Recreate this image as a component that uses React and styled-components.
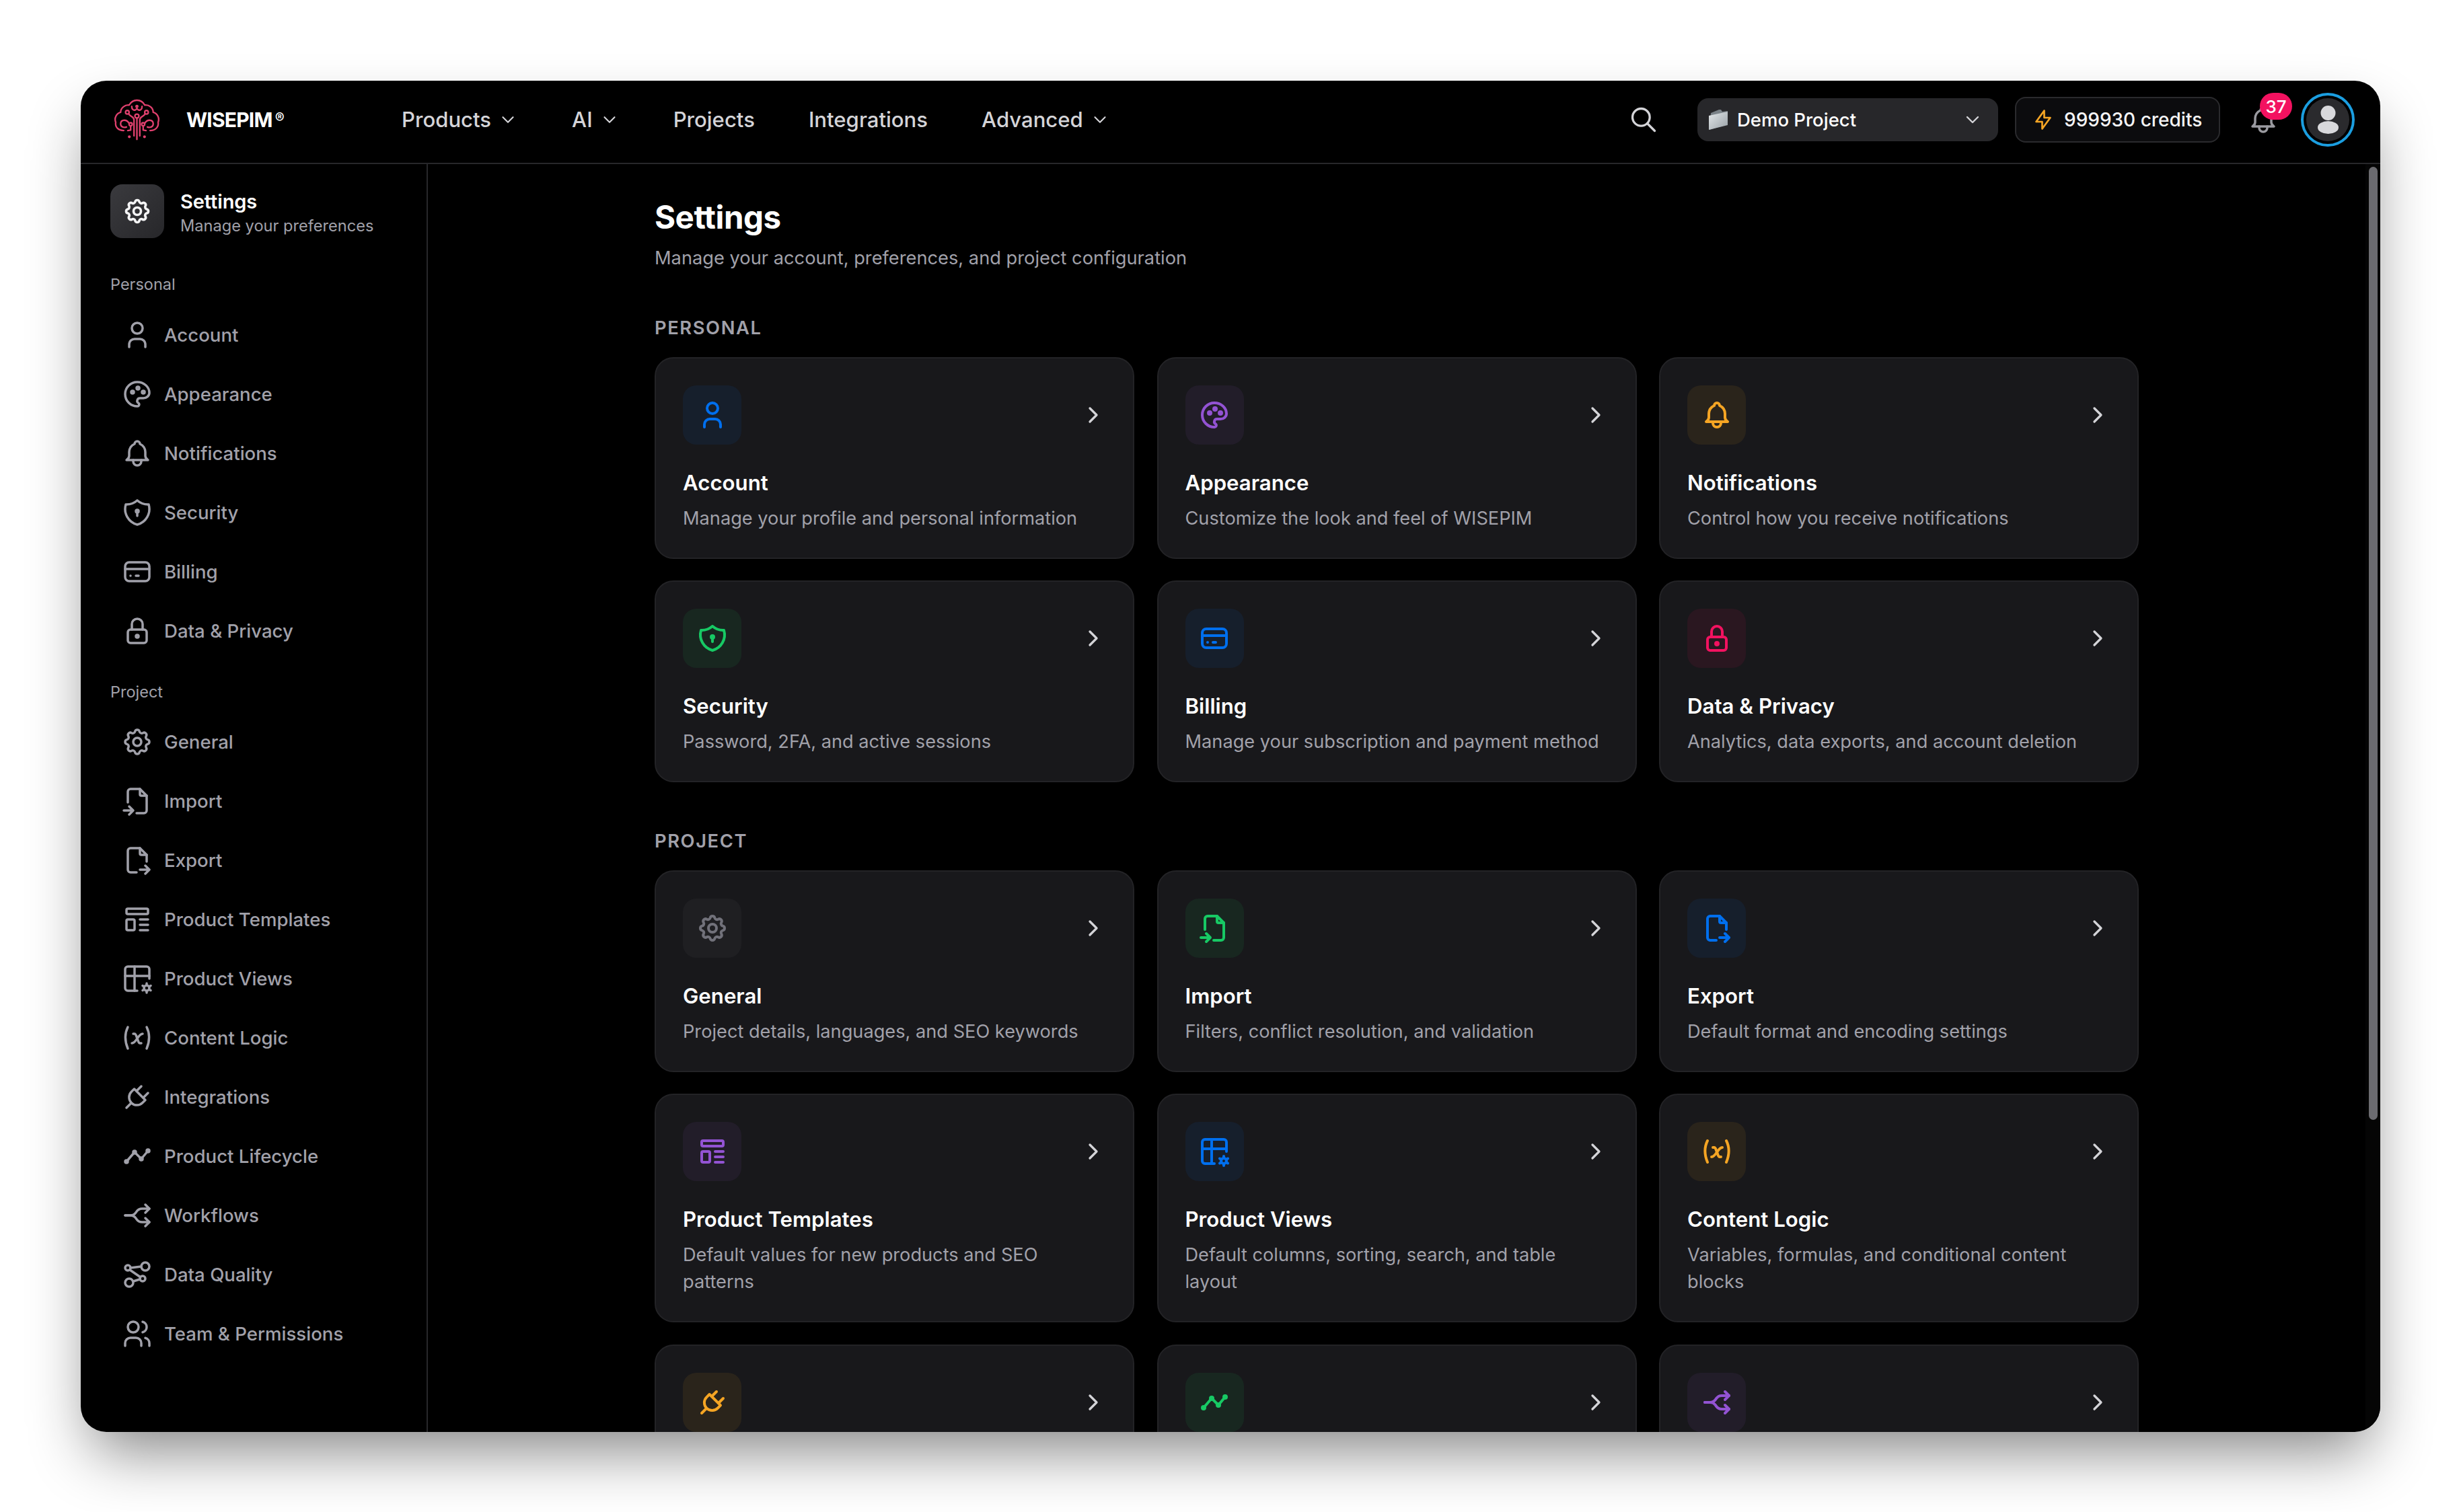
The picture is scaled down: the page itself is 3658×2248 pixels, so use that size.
import React from "react";
import styled, { createGlobalStyle } from "styled-components";
import {
  TbUser, TbPalette, TbBell, TbShieldLock, TbCreditCard, TbLock, TbSettings, TbFileImport, TbFileExport,
  TbTemplate, TbTableOptions, TbVariable, TbPlug, TbTimeline, TbArrowsSplit2, TbChartDots3, TbUsers,
  TbSearch, TbChevronDown, TbChevronRight, TbBolt,
} from "react-icons/tb";

const Global = createGlobalStyle`
  html, body { margin: 0; background: #fff; }
  * { box-sizing: border-box; }
  body { font-family: Inter, "Noto Sans", sans-serif; -webkit-font-smoothing: antialiased; }
`;
const Page = styled.div`
  width: 3658px; height: 2248px; padding: 120px; background: #fff; overflow: hidden;
`;
const Window = styled.div`
  width: 3418px; height: 2009px; background: #000; border-radius: 38px; overflow: hidden;
  display: flex; flex-direction: column;
  box-shadow: 0 44px 90px -16px rgba(0,0,0,.48);
`;
const Header = styled.header`
  height: 124px; flex: none; display: flex; align-items: center; padding: 0 38px 6px 48px;
  border-bottom: 2px solid #27272a;
`;
const Brand = styled.div`display: flex; align-items: center; gap: 37px; width: 429px;`;
const BrandName = styled.div`
  color: #fff; font-weight: 700; font-size: 30px; letter-spacing: -.8px; line-height: 1;
  sup { font-size: 21px; vertical-align: 6px; margin-left: 4px; line-height: 0; font-weight: 600; letter-spacing: 0; }
`;
const Nav = styled.nav`display: flex; align-items: center; gap: 80px;`;
const NavItem = styled.div`
  display: flex; align-items: center; gap: 10px; color: #d4d4d8; font-size: 31.1px; font-weight: 500;
  svg { stroke-width: 1.7; }
`;
const Right = styled.div`margin-left: auto; display: flex; align-items: center;`;
const SearchBtn = styled.div`
  display: flex; color: #d4d4d8; margin-right: 58px; svg { stroke-width: 1.8; }
`;
const Select = styled.div`
  width: 447px; height: 64px; background: #27272a; border-radius: 16px; display: flex; align-items: center;
  padding: 0 22px 0 16px; gap: 13px; color: #fff; font-size: 27.5px; font-weight: 500; margin-right: 25px;
  svg.chev { margin-left: auto; color: #d4d4d8; stroke-width: 1.8; }
`;
const Credits = styled.div`
  width: 305px; height: 68px; background: #0c0c0e; border: 2px solid #2a2a2d; border-radius: 16px; display: flex; align-items: center;
  padding-left: 22px; gap: 13px; color: #f4f4f5; font-size: 28px; font-weight: 500; margin-right: 40px;
  svg { color: #f5a524; stroke-width: 1.8; flex: none; }
`;
const BellWrap = styled.div`
  position: relative; width: 48px; height: 48px; color: #9a9aa0; margin-right: 32px; svg { stroke-width: 1.75; display: block; }
`;
const Badge = styled.span`
  position: absolute; left: 19px; top: -16px; width: 48px; height: 40px; border-radius: 20px; background: #f31260;
  color: #fff; font-size: 26px; font-weight: 500; display: flex; align-items: center; justify-content: center;
`;
const Avatar = styled.div`
  width: 80px; height: 80px; border-radius: 50%; border: 4px solid #1b9ee0; padding: 4px; background: #000; flex: none;
`;
const AvatarInner = styled.div`
  width: 100%; height: 100%; border-radius: 50%; background: #2a2a2d; display: flex; align-items: center; justify-content: center;
`;
const Body = styled.div`flex: 1; min-height: 0; display: flex;`;
const Sidebar = styled.aside`
  width: 516px; flex: none; border-right: 2px solid #27272a; padding: 30px 0 0 44px;
`;
const SideHead = styled.div`display: flex; align-items: center; gap: 24px; margin-bottom: 54px;`;
const SideTile = styled.div`
  width: 80px; height: 80px; border-radius: 18px; background: linear-gradient(135deg,#3a3a3e,#27272a);
  display: flex; align-items: center; justify-content: center; color: #f4f4f5; svg { stroke-width: 2; }
`;
const SideText = styled.div`padding-top: 4px;`;
const SideTitle = styled.div`color: #fff; font-size: 29px; font-weight: 600; line-height: 40px; letter-spacing: -.1px;`;
const SideSub = styled.div`color: #a1a1aa; font-size: 23.6px; line-height: 32px;`;
const GroupLabel = styled.div`
  color: #a1a1aa; font-size: 23.5px; line-height: 30px; margin-bottom: ${p => p.$bottom}px; margin-top: ${p => p.$top || 0}px;
`;
const SideItem = styled.div`
  height: 88px; display: flex; align-items: center; gap: 16px; padding-left: 16px; color: #a1a1aa; font-size: 27.6px; font-weight: 500;
  svg { stroke-width: 1.75; flex: none; }
`;
const Main = styled.main`flex: 1; min-width: 0; overflow: hidden; padding: 49px 337px 0;`;
const ScrollTrack = styled.div`width: 22px; flex: none; padding: 4px 4px 0 5px; background: #050505;`;
const ScrollThumb = styled.div`height: 1417px; border-radius: 7px; background: #6b6b70;`;
const Title = styled.h1`margin: 0; color: #fff; font-size: 47.5px; font-weight: 700; line-height: 60px; letter-spacing: -.5px;`;
const Sub = styled.p`margin: 11px 0 0; color: #a1a1aa; font-size: 27.25px; line-height: 40px;`;
const SectionLabel = styled.h2`
  margin: ${p => p.$top}px 0 26.5px; color: #a1a1aa; font-size: 27.3px; line-height: 32px; font-weight: 600; letter-spacing: 1.6px; text-transform: uppercase;
`;
const Grid = styled.div`display: grid; grid-template-columns: repeat(3, 713px); column-gap: 33.5px; row-gap: 32.5px;`;
const Card = styled.div`
  background: #18181b; border: 2px solid #232326; border-radius: 28px; padding: 40px 39px 38px 40px;
`;
const CardTop = styled.div`display: flex; align-items: center; justify-content: space-between; color: #d4d4d8; > svg { stroke-width: 2; }`;
const Tile = styled.div`
  width: 87px; height: 88px; border-radius: 20px; display: flex; align-items: center; justify-content: center;
  color: ${p => p.$c}; background: ${p => p.$c}15;
  svg { stroke-width: 2; }
`;
const CardTitle = styled.div`margin-top: 35px; color: #fff; font-size: 31.2px; font-weight: 600; line-height: 44px;`;
const CardDesc = styled.div`margin-top: 11px; color: #a1a1aa; font-size: 27.2px; line-height: 40px;`;

const blue = "#006fee", purple = "#9353d3", amber = "#f5a524", green = "#17c964", pink = "#f31260", gray = "#71717a";

const personal = [
  ["Account", TbUser, blue, "Manage your profile and personal information"],
  ["Appearance", TbPalette, purple, "Customize the look and feel of WISEPIM"],
  ["Notifications", TbBell, amber, "Control how you receive notifications"],
  ["Security", TbShieldLock, green, "Password, 2FA, and active sessions"],
  ["Billing", TbCreditCard, blue, "Manage your subscription and payment method"],
  ["Data & Privacy", TbLock, pink, "Analytics, data exports, and account deletion"],
];
const project = [
  ["General", TbSettings, gray, "Project details, languages, and SEO keywords"],
  ["Import", TbFileImport, green, "Filters, conflict resolution, and validation"],
  ["Export", TbFileExport, blue, "Default format and encoding settings"],
  ["Product Templates", TbTemplate, purple, "Default values for new products and SEO patterns"],
  ["Product Views", TbTableOptions, blue, "Default columns, sorting, search, and table layout"],
  ["Content Logic", TbVariable, amber, "Variables, formulas, and conditional content blocks"],
];
const projectCut = [
  ["Integrations", TbPlug, amber],
  ["Product Lifecycle", TbTimeline, green],
  ["Workflows", TbArrowsSplit2, purple],
];
const sideProject = [...project, ...projectCut, ["Data Quality", TbChartDots3], ["Team & Permissions", TbUsers]];

const Logo = () => (
  <svg width="72" height="63" viewBox="25 20 215 190" fill="none" stroke="#e0406e" strokeWidth="7" strokeLinecap="round" strokeLinejoin="round" style={{ flex: "none" }}>
    <path d="M72 162C48 162 32 147 36 125C28 105 40 85 58 80C58 60 78 46 96 48C105 32 118 26 131 26C146 26 158 32 166 48C186 46 204 60 204 80C222 85 234 105 226 125C230 145 214 162 190 162" />
    <path d="M131 106V202" />
    <circle cx="131" cy="97" r="9" />
    <path d="M108 54C108 72 124 76 131 62C138 76 154 72 154 54" />
    <circle cx="131" cy="54" r="4" />
    <circle cx="88" cy="80" r="8" /><circle cx="174" cy="80" r="8" />
    <path d="M94 87C100 100 118 98 118 114V186M168 87C162 100 144 98 144 114V186" />
    <circle cx="103" cy="134" r="7" /><circle cx="159" cy="134" r="7" />
    <path d="M96 130C85 110 60 112 58 130C56 146 72 150 84 146M166 130C177 110 202 112 204 130C206 146 190 150 178 146" />
    <path d="M103 141V160L90 162M159 141V160L172 162" />
    <circle cx="97" cy="190" r="3" fill="#e0406e" /><circle cx="165" cy="190" r="3" fill="#e0406e" />
  </svg>
);
const Folder = () => (
  <svg width="30" height="32" viewBox="0 0 30 32" style={{ flex: "none" }}>
    <defs>
      <linearGradient id="fg" x1="0" y1="0" x2="1" y2="1">
        <stop offset="0" stopColor="#e4e8ea" /><stop offset="1" stopColor="#98a0a6" />
      </linearGradient>
    </defs>
    <path d="M4 6l12-5h3l2 3 8-1v20L2 31z" fill="#7a8288" />
    <path d="M1 10l28-6v20L1 31z" fill="url(#fg)" />
  </svg>
);
const AvatarGlyph = () => (
  <svg width="31" height="42" viewBox="0 0 31 42" fill="#d9d9dc">
    <circle cx="15.500" cy="11" r="11" /><ellipse cx="15.500" cy="32.500" rx="15.500" ry="9.500" />
  </svg>
);

const SettingsCard = ({ row }) => {
  const [title, Icon, color, desc] = row;
  return (
    <Card>
      <CardTop>
        <Tile $c={color}><Icon size={48} /></Tile>
        <TbChevronRight size={40} />
      </CardTop>
      {desc && <CardTitle>{title}</CardTitle>}
      {desc && <CardDesc>{desc}</CardDesc>}
    </Card>
  );
};
const SideRow = ({ row }) => {
  const [title, Icon] = row;
  return <SideItem><Icon size={48} />{title}</SideItem>;
};

export default function App() {
  return (
    <Page>
      <Global />
      <Window>
        <Header>
          <Brand>
            <Logo />
            <BrandName>WISEPIM<sup>®</sup></BrandName>
          </Brand>
          <Nav>
            <NavItem>Products<TbChevronDown size={30} /></NavItem>
            <NavItem>AI<TbChevronDown size={30} /></NavItem>
            <NavItem>Projects</NavItem>
            <NavItem>Integrations</NavItem>
            <NavItem>Advanced<TbChevronDown size={30} /></NavItem>
          </Nav>
          <Right>
            <SearchBtn><TbSearch size={44} /></SearchBtn>
            <Select><Folder />Demo Project<TbChevronDown className="chev" size={32} /></Select>
            <Credits><TbBolt size={36} />999930 credits</Credits>
            <BellWrap><TbBell size={48} /><Badge>37</Badge></BellWrap>
            <Avatar><AvatarInner><AvatarGlyph /></AvatarInner></Avatar>
          </Right>
        </Header>
        <Body>
          <Sidebar>
            <SideHead>
              <SideTile><TbSettings size={44} /></SideTile>
              <SideText>
                <SideTitle>Settings</SideTitle>
                <SideSub>Manage your preferences</SideSub>
              </SideText>
            </SideHead>
            <GroupLabel $bottom={16}>Personal</GroupLabel>
            {personal.map(r => <SideRow key={r[0]} row={r} />)}
            <GroupLabel $top={32} $bottom={15}>Project</GroupLabel>
            {sideProject.map(r => <SideRow key={r[0]} row={r} />)}
          </Sidebar>
          <Main>
            <Title>Settings</Title>
            <Sub>Manage your account, preferences, and project configuration</Sub>
            <SectionLabel $top={68}>Personal</SectionLabel>
            <Grid>{personal.map(r => <SettingsCard key={r[0]} row={r} />)}</Grid>
            <SectionLabel $top={72}>Project</SectionLabel>
            <Grid>{[...project, ...projectCut].map(r => <SettingsCard key={r[0]} row={r} />)}</Grid>
          </Main>
          <ScrollTrack><ScrollThumb /></ScrollTrack>
        </Body>
      </Window>
    </Page>
  );
}
